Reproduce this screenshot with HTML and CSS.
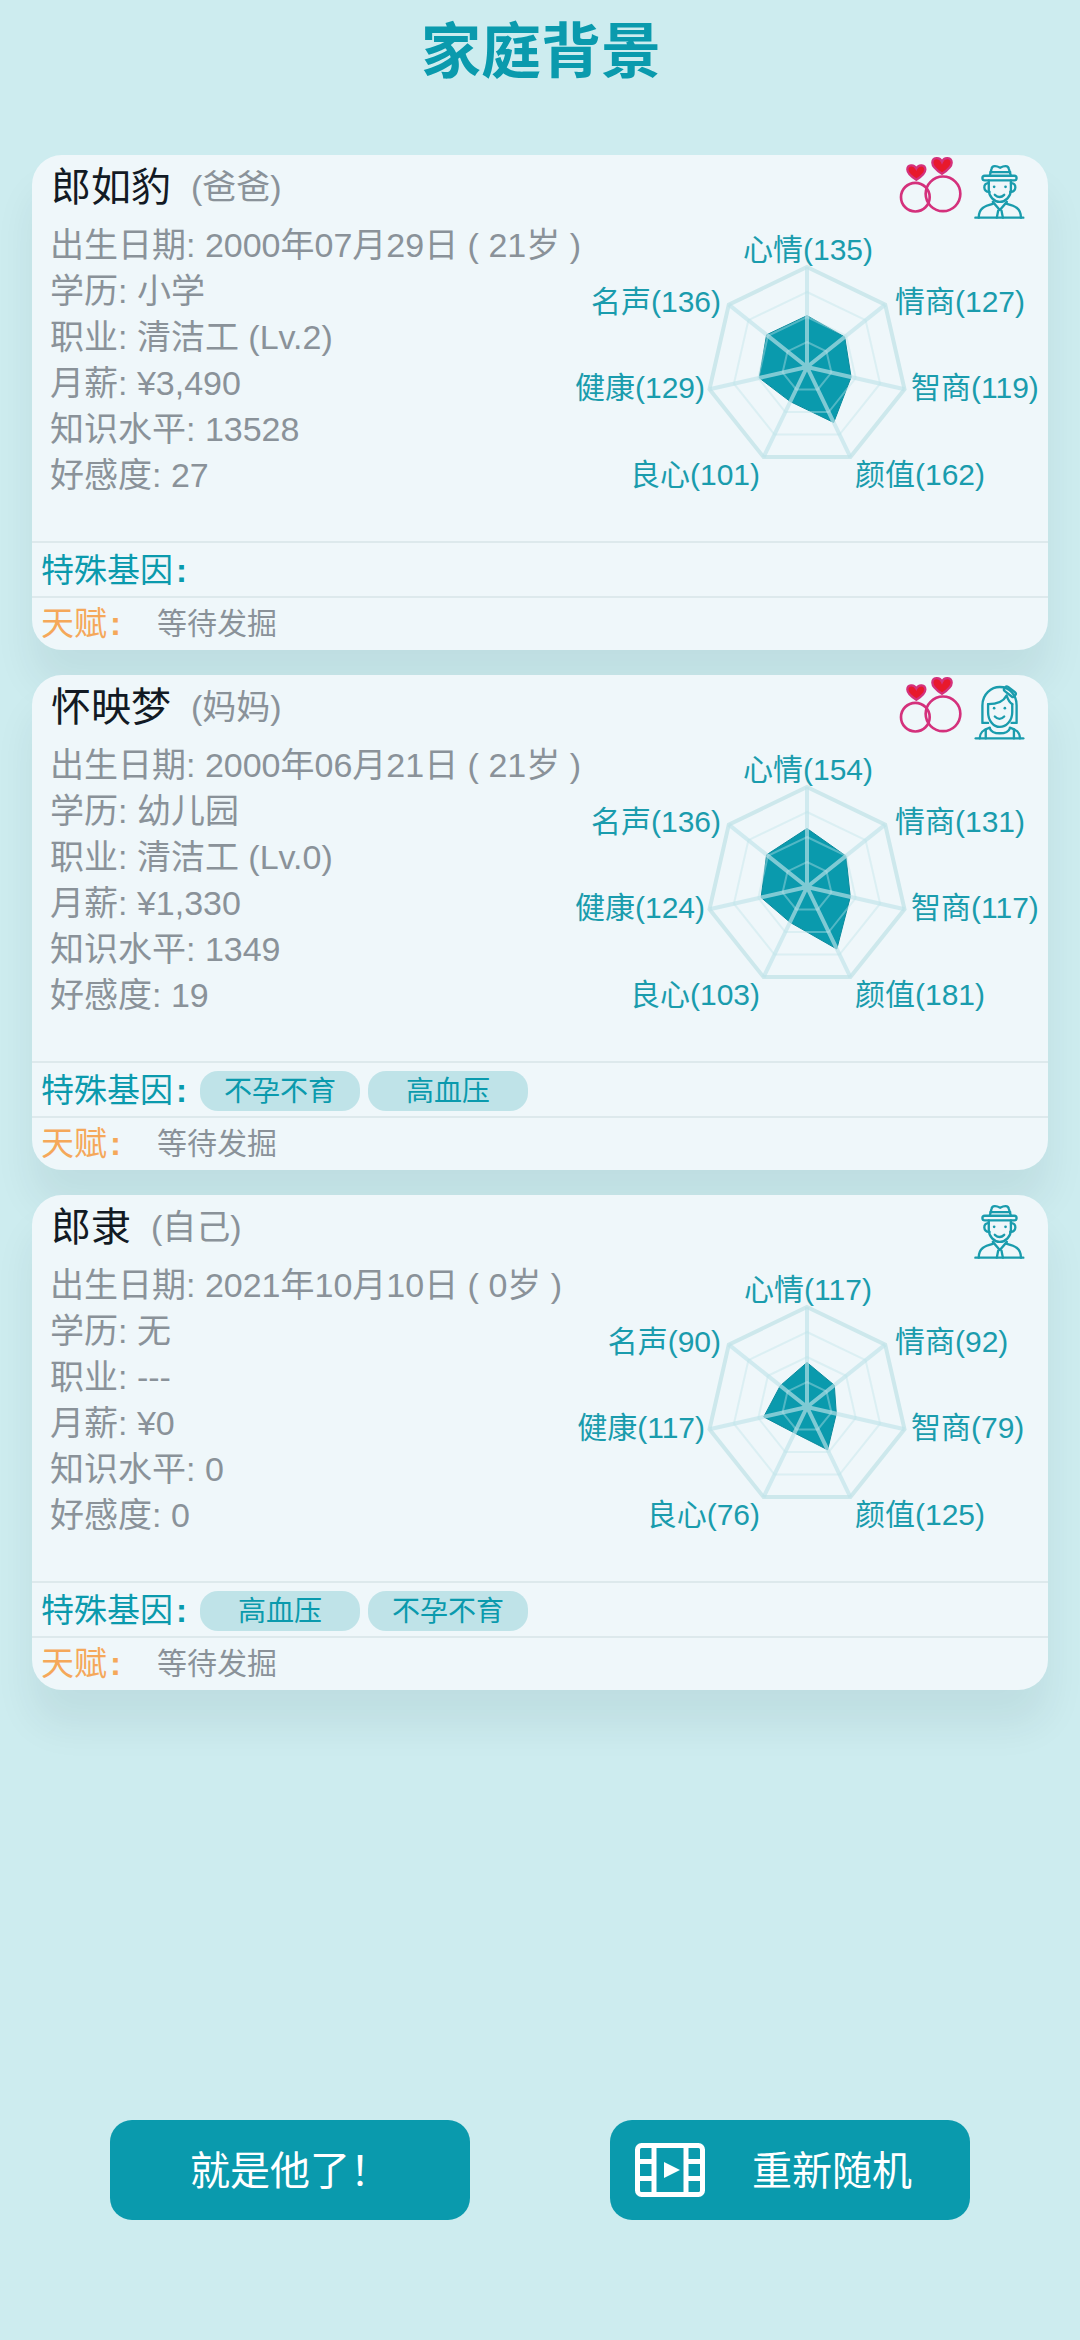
FILE: index.html
```html
<!DOCTYPE html>
<html lang="zh-CN">
<head>
    <meta charset="UTF-8">
    <meta name="viewport" content="width=device-width, initial-scale=1.0">
    <title>家庭背景</title>
    <link rel="stylesheet" href="styles.css">
</head>
<body>
    <!-- shared drawings -->
    <svg class="defs">
        <symbol id="icon-rings" viewBox="50 50 195 170">
            <circle class="ring" cx="102" cy="170" r="43"/>
            <circle class="ring" cx="185" cy="160" r="52"/>
            <path class="heart" d="M105 118C85 105 78 95 78 87C78 72 98 70 105 84C112 70 132 72 132 87C132 95 125 105 105 118Z"/>
            <path class="heart" d="M182 100C160 86 153 75 153 67C153 50 175 48 182 64C189 48 211 50 211 67C211 75 204 86 182 100Z"/>
        </symbol>
        <symbol id="icon-man" viewBox="275 70 155 170">
            <g class="line-icon">
                <path d="M325 108L330 88C332 76 345 78 356 84C367 78 380 76 382 88L388 108"/>
                <path d="M327 97H386"/>
                <rect x="303" y="108" width="102" height="14" rx="7"/>
                <path d="M322 122V150C322 170 338 186 355 186C372 186 388 170 388 150V122"/>
                <path d="M322 130C304 128 304 158 324 156"/>
                <path d="M388 130C406 128 406 158 386 156"/>
                <path d="M340 165Q355 178 368 165"/>
                <path d="M334 192C310 198 292 205 292 233"/>
                <path d="M376 192C400 198 418 205 418 233"/>
                <path d="M334 186L355 210L376 186"/>
                <path d="M350 212L346 233M360 212L364 233"/>
                <path d="M282 233H425"/>
            </g>
            <circle class="icon-dot" cx="338" cy="141" r="4"/>
            <circle class="icon-dot" cx="372" cy="141" r="4"/>
        </symbol>
        <symbol id="icon-woman" viewBox="275 53 155 170">
            <g class="line-icon">
                <path d="M320 172H303V120C303 85 330 65 355 65C385 65 405 90 405 120V172H390"/>
                <rect x="366" y="71" width="38" height="16" rx="6" transform="rotate(38 385 79)"/>
                <path d="M320 116C340 116 365 110 375 90C380 105 388 114 392 116"/>
                <path d="M320 116V140C320 165 336 184 355 184C374 184 392 165 392 140V116"/>
                <path d="M340 153Q354 167 368 153"/>
                <path d="M295 218C295 200 305 192 325 186"/>
                <path d="M415 218C415 200 405 192 385 186"/>
                <path d="M325 188C332 208 378 208 385 188"/>
                <path d="M313 192V218M397 192V218"/>
                <path d="M283 218H425"/>
            </g>
            <circle class="icon-dot" cx="338" cy="128" r="4"/>
            <circle class="icon-dot" cx="370" cy="128" r="4"/>
        </symbol>
        <g id="radar-grid">
            <polygon class="grid-outer" points="0,-100 78.2,-62.4 97.5,22.3 43.4,90.1 -43.4,90.1 -97.5,22.3 -78.2,-62.4"/>
            <polygon class="grid-inner" points="0,-75 58.6,-46.8 73.1,16.7 32.5,67.6 -32.5,67.6 -73.1,16.7 -58.6,-46.8"/>
            <polygon class="grid-inner" points="0,-50 39.1,-31.2 48.7,11.1 21.7,45 -21.7,45 -48.7,11.1 -39.1,-31.2"/>
            <polygon class="grid-inner" points="0,-25 19.5,-15.6 24.4,5.6 10.8,22.5 -10.8,22.5 -24.4,5.6 -19.5,-15.6"/>
            <path class="grid-spoke" d="M0 0L0 -100M0 0L78.2 -62.4M0 0L97.5 22.3M0 0L43.4 90.1M0 0L-43.4 90.1M0 0L-97.5 22.3M0 0L-78.2 -62.4"/>
        </g>
    </svg>

    <h1 class="page-title">家庭背景</h1>

    <main class="card-list">
        <section class="card">
            <div class="card-main">
                <div class="card-head">
                    <span class="name">郎如豹</span>
                    <span class="role">(爸爸)</span>
                    <div class="icons">
                        <svg class="icon-rings"><use href="#icon-rings"/></svg>
                        <svg class="icon-person"><use href="#icon-man"/></svg>
                    </div>
                </div>
                <div class="info">
                    <p>出生日期: 2000年07月29日 ( 21岁 )</p>
                    <p>学历: 小学</p>
                    <p>职业: 清洁工 (Lv.2)</p>
                    <p>月薪: ¥3,490</p>
                    <p>知识水平: 13528</p>
                    <p>好感度: 27</p>
                </div>
                <svg class="radar" viewBox="-259 -152 500 340">
                    <polygon class="radar-data" points="0,-51.3 37.7,-30.1 44.1,10.1 26.7,55.5 -16.7,34.6 -47.8,10.9 -40.4,-32.2"/>
                    <use href="#radar-grid"/>
                    <text class="mid" x="1" y="-107">心情(135)</text>
                    <text x="88" y="-55">情商(127)</text>
                    <text x="104" y="31">智商(119)</text>
                    <text x="48" y="118">颜值(162)</text>
                    <text class="end" x="-47" y="118">良心(101)</text>
                    <text class="end" x="-102" y="31">健康(129)</text>
                    <text class="end" x="-86" y="-55">名声(136)</text>
                </svg>
            </div>
            <div class="gene-row">
                <span class="gene-label">特殊基因<b>:</b></span>
            </div>
            <div class="talent-row">
                <span class="talent-label">天赋<b>:</b></span>
                <span class="talent-value">等待发掘</span>
            </div>
        </section>

        <section class="card">
            <div class="card-main">
                <div class="card-head">
                    <span class="name">怀映梦</span>
                    <span class="role">(妈妈)</span>
                    <div class="icons">
                        <svg class="icon-rings"><use href="#icon-rings"/></svg>
                        <svg class="icon-person"><use href="#icon-woman"/></svg>
                    </div>
                </div>
                <div class="info">
                    <p>出生日期: 2000年06月21日 ( 21岁 )</p>
                    <p>学历: 幼儿园</p>
                    <p>职业: 清洁工 (Lv.0)</p>
                    <p>月薪: ¥1,330</p>
                    <p>知识水平: 1349</p>
                    <p>好感度: 19</p>
                </div>
                <svg class="radar" viewBox="-259 -152 500 340">
                    <polygon class="radar-data" points="0,-58.5 38.9,-31 43.3,9.9 29.8,62 -17,35.3 -45.9,10.5 -40.4,-32.2"/>
                    <use href="#radar-grid"/>
                    <text class="mid" x="1" y="-107">心情(154)</text>
                    <text x="88" y="-55">情商(131)</text>
                    <text x="104" y="31">智商(117)</text>
                    <text x="48" y="118">颜值(181)</text>
                    <text class="end" x="-47" y="118">良心(103)</text>
                    <text class="end" x="-102" y="31">健康(124)</text>
                    <text class="end" x="-86" y="-55">名声(136)</text>
                </svg>
            </div>
            <div class="gene-row">
                <span class="gene-label">特殊基因<b>:</b></span>
                <span class="chip">不孕不育</span>
                <span class="chip">高血压</span>
            </div>
            <div class="talent-row">
                <span class="talent-label">天赋<b>:</b></span>
                <span class="talent-value">等待发掘</span>
            </div>
        </section>

        <section class="card">
            <div class="card-main">
                <div class="card-head">
                    <span class="name">郎隶</span>
                    <span class="role">(自己)</span>
                    <div class="icons">
                        <svg class="icon-person"><use href="#icon-man"/></svg>
                    </div>
                </div>
                <div class="info">
                    <p>出生日期: 2021年10月10日 ( 0岁 )</p>
                    <p>学历: 无</p>
                    <p>职业: ---</p>
                    <p>月薪: ¥0</p>
                    <p>知识水平: 0</p>
                    <p>好感度: 0</p>
                </div>
                <svg class="radar" viewBox="-259 -152 500 340">
                    <polygon class="radar-data" points="0,-44.5 27.3,-21.8 29.3,6.7 20.6,42.8 -12.5,26 -43.3,9.9 -26.7,-21.3"/>
                    <use href="#radar-grid"/>
                    <text class="mid" x="1" y="-107">心情(117)</text>
                    <text x="88" y="-55">情商(92)</text>
                    <text x="104" y="31">智商(79)</text>
                    <text x="48" y="118">颜值(125)</text>
                    <text class="end" x="-47" y="118">良心(76)</text>
                    <text class="end" x="-102" y="31">健康(117)</text>
                    <text class="end" x="-86" y="-55">名声(90)</text>
                </svg>
            </div>
            <div class="gene-row">
                <span class="gene-label">特殊基因<b>:</b></span>
                <span class="chip">高血压</span>
                <span class="chip">不孕不育</span>
            </div>
            <div class="talent-row">
                <span class="talent-label">天赋<b>:</b></span>
                <span class="talent-value">等待发掘</span>
            </div>
        </section>
    </main>

    <footer class="actions">
        <button class="action-btn"><span class="action-text">就是他了！</span></button>
        <button class="action-btn action-btn-video">
            <svg class="film-icon" viewBox="0 0 70 54">
                <rect x="2.5" y="2.5" width="65" height="49" rx="4"/>
                <path d="M19 2.5V51.5M51 2.5V51.5M2.5 18.5H19M2.5 35.5H19M51 18.5H67.5M51 35.5H67.5"/>
                <polygon points="29,19 45,27 29,35"/>
            </svg>
            <span class="action-text">重新随机</span>
        </button>
    </footer>
</body>
</html>
```
FILE: styles.css
```css
body {
    margin: 0;
    min-height: 2340px;
    display: flex;
    flex-direction: column;
    background-color: #cdecef;
    font-family: "Liberation Sans", "Noto Sans CJK SC", sans-serif;
}
.defs {
    display: none;
}
.page-title {
    margin: 0 0 49px;
    height: 106px;
    line-height: 106px;
    padding-left: 2px;
    text-align: center;
    font-size: 60px;
    font-weight: 700;
    color: #0a9aad;
}
.card-list {
    display: flex;
    flex-direction: column;
    gap: 25px;
    padding: 0 32px;
}
.card {
    background-color: #eff7fa;
    border-radius: 30px;
    box-shadow: 0 35px 40px rgba(0, 40, 50, 0.07);
}
.card-main {
    position: relative;
    height: 388px;
    box-sizing: border-box;
    border-bottom: 2px solid #dde9ec;
}
.card-head {
    display: flex;
    align-items: flex-start;
    height: 67px;
    padding-left: 19px;
}
.name {
    margin-top: 4px;
    line-height: 56px;
    font-size: 40px;
    color: #121a24;
}
.role {
    margin: 4px 0 0 20px;
    line-height: 56px;
    font-size: 34px;
    color: #8a9299;
}
.icons {
    display: flex;
    margin-left: auto;
    margin-right: 23px;
    gap: 10px;
}
.icon-rings {
    width: 65px;
    height: 57px;
    margin-top: 2px;
}
.icon-person {
    width: 52px;
    height: 57px;
    margin-top: 8px;
}
.ring {
    fill: none;
    stroke: #d4317c;
    stroke-width: 8;
}
.heart {
    fill: #e8192c;
    stroke: #d4317c;
    stroke-width: 7;
}
.line-icon * {
    fill: none;
    stroke: #1a9cad;
    stroke-width: 7;
    stroke-linecap: round;
    stroke-linejoin: round;
}
.icon-dot {
    fill: #1a9cad;
}
.info {
    padding-left: 18px;
    font-size: 34px;
    line-height: 46px;
    color: #8a9299;
}
.info p {
    margin: 0;
}
.radar {
    position: absolute;
    right: 0;
    top: 60px;
    width: 500px;
    height: 340px;
}
.radar text {
    font-size: 30px;
    fill: #1a9cad;
}
.radar text.mid {
    text-anchor: middle;
}
.radar text.end {
    text-anchor: end;
}
.radar-data {
    fill: #0a9aad;
    stroke: #0a8a9c;
    stroke-width: 1;
}
.grid-outer {
    fill: none;
    stroke: #cde8ec;
    stroke-width: 4;
}
.grid-inner {
    fill: none;
    stroke: rgba(190, 228, 233, 0.4);
    stroke-width: 2;
}
.grid-spoke {
    fill: none;
    stroke: rgba(190, 228, 233, 0.65);
    stroke-width: 4;
}
.gene-row {
    display: flex;
    align-items: center;
    gap: 8px;
    height: 55px;
    box-sizing: border-box;
    padding-left: 9px;
    border-bottom: 2px solid #dde9ec;
}
.gene-label {
    width: 151px;
    padding-bottom: 4px;
    font-size: 33px;
    color: #0a9aad;
}
.gene-label b,
.talent-label b {
    margin-left: 3px;
}
.chip {
    width: 160px;
    height: 40px;
    margin-top: 2px;
    line-height: 42px;
    border-radius: 18px;
    text-align: center;
    font-size: 28px;
    color: #0a9aad;
    background-color: #bfe3e8;
}
.talent-row {
    display: flex;
    align-items: center;
    height: 46px;
    padding: 0 0 6px 9px;
}
.talent-label {
    width: 116px;
    font-size: 33px;
    color: #f5a85a;
}
.talent-value {
    font-size: 30px;
    color: #8a9299;
}
.actions {
    display: flex;
    justify-content: center;
    gap: 140px;
    margin-top: auto;
    padding-bottom: 120px;
}
.action-btn {
    display: flex;
    align-items: center;
    justify-content: center;
    width: 360px;
    height: 100px;
    border: none;
    border-radius: 22px;
    font-family: inherit;
    font-size: 40px;
    color: #fff;
    background-color: #0a9aad;
}
.action-btn-video {
    justify-content: flex-start;
    gap: 47px;
    padding: 0 0 0 25px;
}
.action-text {
    padding-bottom: 5px;
}
.film-icon {
    width: 70px;
    height: 54px;
}
.film-icon rect,
.film-icon path {
    fill: none;
    stroke: #fff;
    stroke-width: 5;
}
.film-icon polygon {
    fill: #fff;
}
```
